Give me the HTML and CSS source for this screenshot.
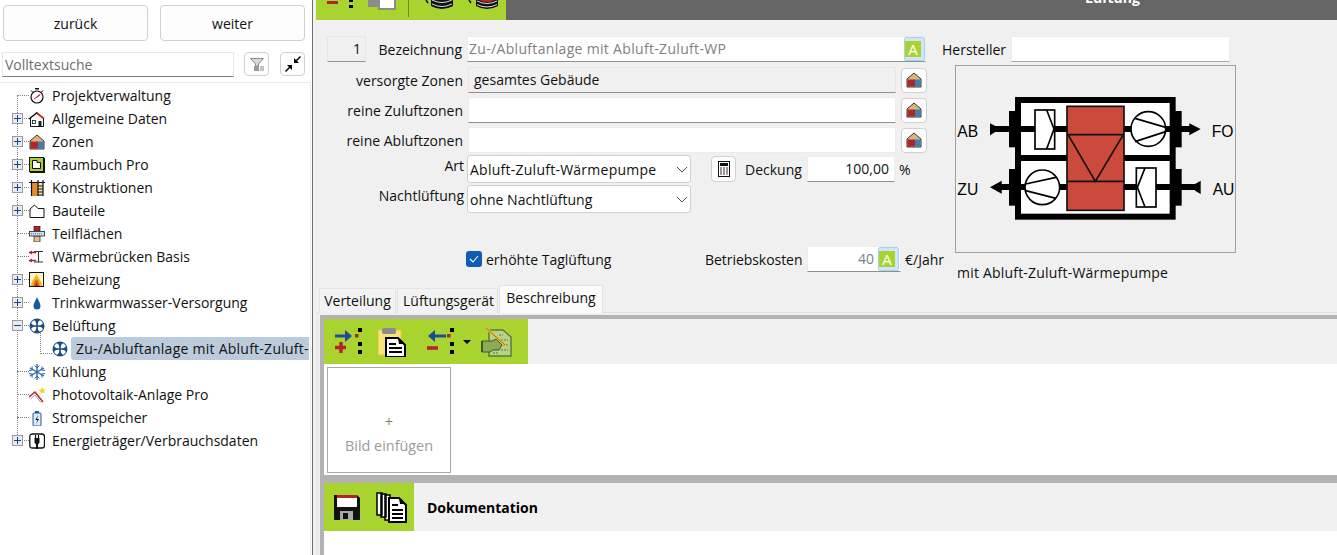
FILE: index.html
```html
<!DOCTYPE html>
<html lang="de">
<head>
<meta charset="utf-8">
<title>Lüftung</title>
<link rel="stylesheet" href="styles.css">
</head>
<body>
<svg class="defs" width="0" height="0">
  <defs>
    <symbol id="zone" viewBox="0 0 16 16">
      <path d="M8 1 15 7V15H1V7Z" fill="#d9b778" stroke="#222" stroke-width=".9"/>
      <rect x="1.500" y="7.500" width="7.500" height="7" fill="#b3242a"/>
      <rect x="9" y="7.500" width="5.500" height="7" fill="#3d7fb5"/>
    </symbol>
    <symbol id="fan" viewBox="0 0 16 16">
      <circle cx="8" cy="8" r="7.500" fill="#1c4e86"/>
      <g transform="rotate(45 8 8)">
        <path d="M8 6.800C6.200 5.500 5.400 3.600 6 1.700 7.300 1.300 8.700 1.300 10 1.700 10.600 3.600 9.800 5.500 8 6.800Z" fill="#fff"/>
        <path d="M8 9.200C6.200 10.500 5.400 12.400 6 14.300 7.300 14.700 8.700 14.700 10 14.300 10.600 12.400 9.800 10.500 8 9.200Z" fill="#fff"/>
        <path d="M6.800 8C5.500 6.200 3.600 5.400 1.700 6 1.300 7.300 1.300 8.700 1.700 10 3.600 10.600 5.500 9.800 6.800 8Z" fill="#fff"/>
        <path d="M9.200 8C10.500 6.200 12.400 5.400 14.300 6 14.700 7.300 14.700 8.700 14.300 10 12.400 10.600 10.500 9.800 9.200 8Z" fill="#fff"/>
      </g>
    </symbol>
    <symbol id="dots" viewBox="0 0 5 28">
      <rect x="0" y="0" width="4" height="4" fill="#000"/>
      <rect x="0" y="14" width="4" height="4" fill="#000"/>
      <rect x="0" y="22" width="4" height="4" fill="#000"/>
    </symbol>
  </defs>
</svg>

<div class="app">
  <aside class="side">
    <div class="nav-row">
      <button class="nav-btn">zurück</button>
      <button class="nav-btn">weiter</button>
    </div>
    <div class="search-row">
      <div class="search">Volltextsuche</div>
      <button class="tool-btn search-filter">
        <svg width="16" height="16" viewBox="0 0 16 16"><path d="M1.500 2.500H14.500L9.500 8V10H6.500V8Z" fill="#d8d8d8" stroke="#8b8b8b"/><rect x="5" y="10" width="5" height="5" fill="#9a9a9a"/><rect x="11" y="10" width="4" height="5" fill="#c4c4c4"/></svg>
      </button>
      <button class="tool-btn search-collapse">
        <svg width="16" height="16" viewBox="0 0 16 16"><path d="M15 0 16 1 12 5 14 7H9V2L11 4Z" fill="#000"/><path d="M1 16 0 15 4 11 2 9H7V14L5 12Z" fill="#000"/></svg>
      </button>
    </div>

    <div class="tree">
      <div class="tree-row"><span class="twig"></span>
        <svg class="ico" viewBox="0 0 16 16"><rect x="6" y="0" width="4" height="1.500" fill="#111"/><path d="M2 2.500 3.500 4M14 2.500 12.500 4" stroke="#111"/><circle cx="8" cy="9" r="6" fill="#fff" stroke="#111" stroke-width="1.200"/><path d="M8 9 11 6.500" stroke="#c9252b" stroke-width="1.300"/><path d="M5 11 8 9" stroke="#c9252b"/></svg>
        <span class="tree-label">Projektverwaltung</span></div>
      <div class="tree-row"><span class="exp"></span><span class="twig short"></span>
        <svg class="ico" viewBox="0 0 16 16"><path d="M1.500 15.500V7L8 2 14.500 7V15.500Z" fill="#fff" stroke="#111"/><path d="M8 1 15.500 7 14 8 8 3.500Z" fill="#c0272d"/><path d="M0 8 8 1.500" stroke="#111" stroke-width="1.300"/><rect x="9.500" y="10" width="3" height="5.500" fill="#222"/><rect x="3.500" y="9.500" width="3" height="3" fill="none" stroke="#111" stroke-width=".8"/></svg>
        <span class="tree-label">Allgemeine Daten</span></div>
      <div class="tree-row"><span class="exp"></span><span class="twig short"></span>
        <svg class="ico"><use href="#zone"/></svg>
        <span class="tree-label">Zonen</span></div>
      <div class="tree-row"><span class="exp"></span><span class="twig short"></span>
        <svg class="ico" viewBox="0 0 16 16"><rect x="1" y="1" width="15" height="15" fill="#111"/><rect x=".5" y=".5" width="14" height="14" fill="#a9cf38" stroke="#111"/><path d="M3.500 3.500H8V5.500H11.500V11.500H3.500Z" fill="#fff" stroke="#111"/></svg>
        <span class="tree-label">Raumbuch Pro</span></div>
      <div class="tree-row"><span class="exp"></span><span class="twig short"></span>
        <svg class="ico" viewBox="0 0 16 16"><rect x="3" y="3" width="6" height="13" fill="#e68a2e"/><rect x="9" y="3" width="5" height="13" fill="#f3e6b4"/><path d="M2.500 0V16M9 0V16M14 0V16" stroke="#111" stroke-width="1.200"/><path d="M0 2.500H16M9 6H14M9 9H14M9 12H14M9 15H14" stroke="#111"/></svg>
        <span class="tree-label">Konstruktionen</span></div>
      <div class="tree-row"><span class="exp"></span><span class="twig short"></span>
        <svg class="ico" viewBox="0 0 16 16"><path d="M1 14.500V6L5.500 2 9 5.500H15V14.500Z" fill="#fff" stroke="#111"/></svg>
        <span class="tree-label">Bauteile</span></div>
      <div class="tree-row"><span class="twig"></span>
        <svg class="ico" viewBox="0 0 16 16"><rect x="5" y="0" width="6" height="5" fill="#b3242a" stroke="#222" stroke-width=".7"/><rect x="5" y="10" width="6" height="6" fill="#e0c08c" stroke="#222" stroke-width=".7"/><rect x=".5" y="5.500" width="15" height="4.500" fill="#cfe0ee" stroke="#222" stroke-width=".8"/><path d="M2 7.800H14" stroke="#3b6ea8" stroke-dasharray="1 1"/></svg>
        <span class="tree-label">Teilflächen</span></div>
      <div class="tree-row"><span class="twig"></span>
        <svg class="ico" viewBox="0 0 16 16"><path d="M5 2.500H14M5 13H14M9.500 3V13" stroke="#333" stroke-width="1.100"/><path d="M0 3.500H7M0 11.500H7" stroke="#a82024" stroke-width="1.300"/><path d="M0 3.500 3 1.500V5.500ZM0 11.500 3 9.500V13.500Z" fill="#a82024"/></svg>
        <span class="tree-label">Wärmebrücken Basis</span></div>
      <div class="tree-row"><span class="exp"></span><span class="twig short"></span>
        <svg class="ico" viewBox="0 0 16 16"><rect x=".5" y=".5" width="14" height="14" fill="#fff6c4" stroke="#111"/><path d="M7.500 2C9 6 13 9 13 14H2C2 9 6 6 7.500 2Z" fill="#f4b41e"/><path d="M7.500 7C9 9 10.500 11 10.500 14H4.500C4.500 11 6 9 7.500 7Z" fill="#d9641e"/><path d="M7.500 11 9 14H6Z" fill="#b3242a"/></svg>
        <span class="tree-label">Beheizung</span></div>
      <div class="tree-row"><span class="exp"></span><span class="twig short"></span>
        <svg class="ico" viewBox="0 0 16 16"><path d="M8 2C9 5 11.500 8 11.500 11A3.500 3.500 0 0 1 4.500 11C4.500 8 7 5 8 2Z" fill="#1c5a9e"/></svg>
        <span class="tree-label">Trinkwarmwasser-Versorgung</span></div>
      <div class="tree-row"><span class="exp exp-open"></span><span class="twig short"></span>
        <svg class="ico"><use href="#fan"/></svg>
        <span class="tree-label">Belüftung</span></div>
      <div class="tree-row tree-child"><span class="elbow"></span>
        <svg class="ico"><use href="#fan"/></svg>
        <span class="tree-label selected">Zu-/Abluftanlage mit Abluft-Zuluft-Wärmepumpe</span></div>
      <div class="tree-row"><span class="twig"></span>
        <svg class="ico" viewBox="0 0 16 16"><path d="M8 0V16M1 4 15 12M15 4 1 12" stroke="#2a66ad" stroke-width="1.400"/><path d="M5.500 1.500 8 4 10.500 1.500M5.500 14.500 8 12 10.500 14.500M0 6.500 3.500 6 3 2.500M16 9.500 12.500 10 13 13.500M0 9.500 3.500 10 3 13.500M16 6.500 12.500 6 13 2.500" stroke="#2a66ad" fill="none"/></svg>
        <span class="tree-label">Kühlung</span></div>
      <div class="tree-row"><span class="twig"></span>
        <svg class="ico" viewBox="0 0 16 16"><path d="M0 10 6 5 14 15" fill="none" stroke="#b3242a" stroke-width="1.500"/><path d="M2 11.500 6 8 12 15.500" fill="none" stroke="#999" stroke-width="1"/><path d="M13 0 14 2 16 2 15 4 16 6 13.500 5.500 12 7 11.500 4.500 9.500 3.500 12 2.500Z" fill="#f1d227"/></svg>
        <span class="tree-label">Photovoltaik-Anlage Pro</span></div>
      <div class="tree-row"><span class="twig"></span>
        <svg class="ico" viewBox="0 0 16 16"><rect x="4" y="3" width="8" height="13" rx="1" fill="#dfeaf6" stroke="#1c5a9e"/><rect x="6" y="1" width="4" height="2" fill="#1c5a9e"/><path d="M9 5 6.500 10H8.500L7 14 10 9H8Z" fill="#111"/></svg>
        <span class="tree-label">Stromspeicher</span></div>
      <div class="tree-row"><span class="exp"></span><span class="twig short"></span>
        <svg class="ico" viewBox="0 0 16 16"><path d="M3.500 1H13Q15.500 1 15.500 3.500V12.500Q15.500 15 13 15H3.500Q.8 15 .8 12.500V3.500Q.8 1 3.500 1Z" fill="#fff" stroke="#111" stroke-width="1.300"/><path d="M5.500 5H10.500V9.500L9 11.500V16H7V11.500L5.500 9.500Z" fill="#111"/><path d="M6.500 2V5M9.500 2V5" stroke="#111" stroke-width="1.200"/></svg>
        <span class="tree-label">Energieträger/Verbrauchsdaten</span></div>
    </div>
  </aside>

  <main class="main">
    <header class="topbar">
      <div class="topbar-tools">
        <svg class="top-icons" width="190" height="20" viewBox="0 0 190 20">
          <rect x="11" y="1" width="11" height="3" fill="#b3242a"/>
          <rect x="33" y="-1" width="4" height="3" fill="#000"/>
          <rect x="33" y="5" width="4" height="3" fill="#000"/>
          <rect x="52" y="-1" width="27" height="8" fill="#8c8c8c"/>
          <path d="M63 -1H79V9H63Z" fill="#fff" stroke="#8c8c8c" stroke-width="2"/>
          <path d="M92.500 0V17" stroke="#6f8a28"/>
          <path d="M110 0 112 3" stroke="#111" stroke-width="1.500"/>
          <path d="M115 -1V6Q126 12 137 6V-1Z" fill="#111"/>
          <path d="M116 0Q126 5 136 0M116 4Q126 9 136 4" fill="none" stroke="#ddd"/>
          <path d="M153 0 155 3" stroke="#111" stroke-width="1.500"/>
          <path d="M160 -1V6Q171 12 182 6V-1Z" fill="#111"/>
          <path d="M163 0H179L174 2H168Z" fill="#b3242a"/>
          <path d="M161 1Q171 6 181 1M161 4.500Q171 9.500 181 4.500" fill="none" stroke="#ddd"/>
        </svg>
      </div>
      <div class="topbar-title"><span class="title-text">Lüftung</span></div>
    </header>

    <section class="form">
      <div class="form-left">
        <div class="row row-first">
          <div class="index-box">1</div>
          <div class="label label-auto">Bezeichnung</div>
          <div class="field field-name">
            <span class="muted wide-md">Zu-/Abluftanlage mit Abluft-Zuluft-WP</span>
            <span class="auto-btn"><span class="auto-a">A</span></span>
          </div>
        </div>
        <div class="row row-zone">
          <div class="label">versorgte Zonen</div>
          <div class="field field-zone field-off">gesamtes Gebäude</div>
          <button class="tool-btn zone-btn"><svg class="ico"><use href="#zone"/></svg></button>
        </div>
        <div class="row row-zone">
          <div class="label">reine Zuluftzonen</div>
          <div class="field field-zone"></div>
          <button class="tool-btn zone-btn"><svg class="ico"><use href="#zone"/></svg></button>
        </div>
        <div class="row row-zone">
          <div class="label">reine Abluftzonen</div>
          <div class="field field-zone field-flat"></div>
          <button class="tool-btn zone-btn"><svg class="ico"><use href="#zone"/></svg></button>
        </div>
        <div class="row row-art">
          <div class="label label-art label-top">Art</div>
          <div class="select"><span class="wide-sm">Abluft-Zuluft-Wärmepumpe</span>
            <svg class="chev" width="12" height="7" viewBox="0 0 12 7"><path d="M1 1 6 6 11 1" fill="none" stroke="#555"/></svg></div>
          <button class="tool-btn calc-btn">
            <svg width="12" height="16" viewBox="0 0 12 16"><rect x=".5" y=".5" width="11" height="15" fill="#fff" stroke="#111"/><rect x="2" y="2" width="8" height="3" fill="#111"/><path d="M2 7H4M5 7H7M8 7H10M2 9H4M5 9H7M8 9H10M2 11H4M5 11H7M8 11H10M2 13H4M5 13H7" stroke="#333" stroke-width="1.200"/><path d="M8 13H10" stroke="#c9252b" stroke-width="1.200"/></svg>
          </button>
          <div class="label-inline deckung">Deckung</div>
          <div class="field field-num">100,00</div>
          <div class="unit">%</div>
        </div>
        <div class="row row-night">
          <div class="label label-night label-top">Nachtlüftung</div>
          <div class="select">ohne Nachtlüftung
            <svg class="chev" width="12" height="7" viewBox="0 0 12 7"><path d="M1 1 6 6 11 1" fill="none" stroke="#555"/></svg></div>
        </div>
        <div class="row row-check">
          <span class="check"><svg width="10" height="8" viewBox="0 0 10 8"><path d="M1 4 4 7 9 1" fill="none" stroke="#fff" stroke-width="1.100"/></svg></span>
          <span class="check-text">erhöhte Taglüftung</span>
          <div class="label-inline betrieb">Betriebskosten</div>
          <div class="field field-cost"><span class="muted cost-val">40</span><span class="auto-btn cost-auto"><span class="auto-a">A</span></span></div>
          <div class="unit">€/Jahr</div>
        </div>
      </div>
      <div class="form-right">
        <div class="row row-maker">
          <div class="label-inline maker-label">Hersteller</div>
          <div class="field field-maker"></div>
        </div>
        <div class="diagram">
          <svg width="279" height="186" viewBox="78 108 837 558">
            <rect x="237" y="243" width="518" height="109" fill="#000"/>
            <rect x="237" y="417" width="518" height="110" fill="#000"/>
            <rect x="264" y="210" width="464" height="350" fill="#fff" stroke="#000" stroke-width="18"/>
            <rect x="264" y="375" width="464" height="18" fill="#000"/>
            <rect x="190" y="288" width="600" height="18" fill="#000"/>
            <rect x="210" y="462" width="590" height="18" fill="#000"/>
            <path d="M180 280 197 289V305L180 316Z" fill="#000"/>
            <path d="M778 280 812 297 778 316Z" fill="#000"/>
            <path d="M180 472 215 452V491Z" fill="#000"/>
            <path d="M812 452 795 462V482L812 492Z" fill="#000"/>
            <rect x="411" y="229" width="171" height="312" fill="#cc4a3c" stroke="#111" stroke-width="5"/>
            <path d="M411 314H582M411 454H582M414 314 496 454 580 314" fill="none" stroke="#111" stroke-width="5"/>
            <rect x="315" y="240" width="59" height="117" fill="#fff" stroke="#000" stroke-width="5"/>
            <path d="M350 240 372 297 350 357" fill="none" stroke="#000" stroke-width="5"/>
            <rect x="619" y="414" width="59" height="117" fill="#fff" stroke="#000" stroke-width="5"/>
            <path d="M645 414 622 472 645 531" fill="none" stroke="#000" stroke-width="5"/>
            <circle cx="655" cy="297" r="52" fill="#fff" stroke="#000" stroke-width="5"/>
            <path d="M615 265 707 292M615 335 707 305" fill="none" stroke="#000" stroke-width="5"/>
            <circle cx="337" cy="472" r="52" fill="#fff" stroke="#000" stroke-width="5"/>
            <path d="M378 442 287 462M378 505 287 482" fill="none" stroke="#000" stroke-width="5"/>
            <text class="dia-text" x="82" y="320">AB</text>
            <text class="dia-text" x="845" y="320">FO</text>
            <text class="dia-text" x="82" y="495">ZU</text>
            <text class="dia-text" x="848" y="495">AU</text>
          </svg>
        </div>
        <div class="caption">mit Abluft-Zuluft-Wärmepumpe</div>
      </div>
    </section>

    <nav class="tabs">
      <div class="tab">Verteilung</div>
      <div class="tab">Lüftungsgerät</div>
      <div class="tab tab-active">Beschreibung</div>
    </nav>

    <section class="pane">
      <div class="pane-inner">
        <div class="toolbar toolbar-main">
          <div class="green green-main">
            <svg class="tb-ico" width="28" height="30" viewBox="0 0 28 30">
              <path d="M0 9H10" stroke="#1c4e96" stroke-width="3"/><path d="M10 3 17 9 10 15Z" fill="#1c4e96"/>
              <path d="M6 15V26M0 20.500H11" stroke="#b3242a" stroke-width="3.500"/>
              <rect x="20" y="7" width="3.500" height="3.500" fill="#b3242a"/>
              <use href="#dots" x="23" y="1" width="5" height="28"/>
            </svg>
            <svg class="tb-ico clip" width="28" height="30" viewBox="0 0 28 30">
              <rect x="0" y="3" width="23" height="25" fill="#f9e27a" stroke="#f2c232"/>
              <rect x="4" y="1" width="14" height="6" rx="2" fill="#8d8d8d"/>
              <path d="M8 11H20L27 18V30H8Z" fill="#fff" stroke="#000" stroke-width="2"/>
              <path d="M20 11 21 17H27Z" fill="#000"/>
              <path d="M11 17H18M11 21H24M11 25H24" stroke="#000" stroke-width="1.800"/>
            </svg>
            <svg class="tb-ico" width="28" height="30" viewBox="0 0 28 30">
              <path d="M8 9H19" stroke="#1c4e96" stroke-width="3"/><path d="M8 3 1 9 8 15Z" fill="#1c4e96"/>
              <path d="M0 21H11" stroke="#b3242a" stroke-width="3.500"/>
              <rect x="20" y="7" width="3.500" height="3.500" fill="#b3242a"/>
              <use href="#dots" x="23" y="1" width="5" height="28"/>
            </svg>
            <svg class="tb-caret" width="8" height="4" viewBox="0 0 8 4"><path d="M0 0H8L4 4Z" fill="#000"/></svg>
            <svg class="tb-ico" width="31" height="30" viewBox="0 0 31 30">
              <path d="M8 3H22L30 10V29H8Z" fill="#b9d28a" stroke="#5c7a38" stroke-width="1.500"/>
              <path d="M18 8H22M20 13H27M22 18H27M20 23H27M12 26H17" stroke="#5c7a38" stroke-dasharray="2 1"/>
              <path d="M1 14H11L15 12 21 18 18 23H12L9 25H1Z" fill="#8bab54" stroke="#3f5a28"/>
              <path d="M1 14V25" stroke="#3f5a28" stroke-width="2"/>
              <path d="M5 1 24 18" stroke="#e6c22e" stroke-width="2.500"/>
              <path d="M5 1 24 18" stroke="#5c4a18" stroke-width=".6"/>
            </svg>
          </div>
        </div>
        <div class="gallery">
          <div class="add-image">
            <span class="add-plus">+</span>
            <span class="add-text">Bild einfügen</span>
          </div>
        </div>
        <div class="splitter"></div>
        <div class="toolbar toolbar-doc">
          <div class="green green-doc">
            <svg class="tb-ico" width="27" height="27" viewBox="0 0 27 27">
              <path d="M1 1H24L27 4V26H1Z" fill="#111"/>
              <rect x="4" y="1" width="20" height="3" fill="#b3242a"/>
              <rect x="4" y="4" width="20" height="9" fill="#fff"/>
              <rect x="7" y="17" width="13" height="9" fill="#aaa"/>
              <rect x="10" y="19" width="5" height="6" fill="#111"/>
            </svg>
            <svg class="tb-ico doc-stack" width="31" height="31" viewBox="0 0 31 31">
              <path d="M1 1H6V23H1ZM5 2H10V25H5ZM9 3H14V28H9Z" fill="#fff" stroke="#000" stroke-width="1.500"/>
              <path d="M13 6H23L30 13V30H13Z" fill="#fff" stroke="#000" stroke-width="2"/>
              <path d="M23 6 24 12H30Z" fill="#000"/>
              <path d="M16 13H22M16 18H27M16 22H27M16 26H27" stroke="#000" stroke-width="1.800"/>
            </svg>
          </div>
          <div class="doc-title">Dokumentation</div>
        </div>
        <div class="doc-body"></div>
      </div>
    </section>
  </main>
</div>
</body>
</html>
```

FILE: styles.css
```css
* { box-sizing: border-box; }
html, body { margin: 0; height: 100%; overflow: hidden; }
body { font-family: "Open Sans", "Noto Sans", sans-serif; font-size: 14px; color: #111; background: #fff; }
.defs { display: block; height: 0; }
button { font: inherit; color: inherit; padding: 0; }
.wide-md { letter-spacing: .32px; }
.wide-sm { letter-spacing: .25px; }

.app { display: flex; height: 555px; }

/* left panel */
.side { width: 313px; flex: none; background: #fff; border-right: 1px solid #707070; overflow: hidden; }
.nav-row { display: flex; gap: 12px; padding: 5px 0 0 3px; }
.nav-btn { width: 145px; height: 36px; background: #fdfdfd; border: 1px solid #d0d0d0; border-radius: 4px; }
.search-row { display: flex; align-items: flex-start; padding: 11px 0 0 2px; height: 41px; }
.search { width: 232px; height: 25px; line-height: 23px; padding-left: 2px; color: #6d6d6d; background: #fff; border: 1px solid #e8e8e8; border-bottom: 1px solid #7c7c7c; }
.tool-btn { display: flex; align-items: center; justify-content: center; background: #fdfdfd; border: 1px solid #d0d0d0; border-radius: 4px; }
.search-filter { width: 25px; height: 24px; margin-left: 10px; }
.search-collapse { width: 25px; height: 24px; margin-left: 11px; }

.tree { position: relative; width: 311px; height: 473px; padding-top: 1px; border-top: 1px solid #ebebeb; border-right: 1px solid #ebebeb; overflow: hidden; }
.tree::before { content: ""; position: absolute; left: 17px; top: 13px; height: 345px; border-left: 1px dotted #808080; }
.tree-row { position: relative; display: flex; align-items: center; height: 23px; white-space: nowrap; }
.twig { width: 12px; margin-left: 17px; border-top: 1px dotted #808080; flex: none; }
.twig.short { width: 7px; margin-left: 0; }
.exp { position: relative; width: 11px; height: 11px; margin-left: 12px; margin-right: -1px; background: #e6ecf4; border: 1px solid #9a9a9a; flex: none; }
.exp::before { content: ""; position: absolute; left: 1px; top: 4px; width: 7px; height: 1px; background: #1c3f7c; }
.exp::after { content: ""; position: absolute; left: 4px; top: 1px; width: 1px; height: 7px; background: #1c3f7c; }
.exp-open::after { display: none; }
.ico { width: 16px; height: 16px; flex: none; }
.tree-label { margin-left: 7px; }
.tree-child { padding-left: 40px; }
.elbow { width: 12px; height: 23px; margin-top: -12px; border-left: 1px dotted #808080; border-bottom: 1px dotted #808080; flex: none; }
.selected { margin-left: 3px; width: 238px; height: 23px; line-height: 23px; padding-left: 5px; overflow: hidden; letter-spacing: .25px; background: #bccbdc; border-radius: 3px 0 0 3px; }

/* main */
.main { flex: 1; min-width: 0; background: #f0f0f0; display: flex; flex-direction: column; overflow: hidden; }
.topbar { display: flex; height: 20px; flex: none; padding-left: 3px; overflow: hidden; }
.topbar-tools { width: 190px; flex: none; background: #a9d42f; }
.top-icons { display: block; }
.topbar-title { flex: 1; background: #666; color: #fff; font-weight: 700; padding-left: 579px; line-height: 0; }
.title-text { display: block; margin-top: -2px; }

.form { display: flex; height: 252px; flex: none; padding: 16px 0 0 14px; }
.form-left { width: 600px; flex: none; }
.form-right { margin-left: 15px; width: 295px; flex: none; }
.row { display: flex; align-items: center; }
.row > * { flex: none; }
.row-first { height: 26px; margin-bottom: 5px; padding-right: 1px; }
.row-zone { height: 26px; margin-bottom: 4px; }
.row-art { height: 28px; margin: -2px 0 2px; }
.row-night { height: 28px; }
.row-check { height: 26px; margin-top: 33px; padding-left: 139px; }
.label { width: 136px; text-align: right; margin-right: 5px; }
.label-auto { width: auto; margin-left: auto; margin-right: 5px; }
.label-art { margin-right: 3px; margin-left: 1px; width: 136px; }
.label-night { margin-right: 3px; margin-left: 0; width: 137px; }
.label-top { align-self: flex-start; padding-top: 1px; }
.index-box { width: 39px; height: 26px; line-height: 24px; text-align: right; padding-right: 4px; background: #f0f0f0; border: 1px solid #e6e6e6; border-bottom: 1px solid #8f8f8f; }
.field { height: 26px; line-height: 24px; background: #fff; border: 1px solid #ececec; border-bottom: 1px solid #8f8f8f; padding: 0 2px; }
.field-name { display: flex; justify-content: space-between; width: 459px; padding: 0 0 0 1px; }
.field-zone { width: 428px; padding-left: 5px; }
.field-off { background: #f0f0f0; border-color: #e6e6e6; border-bottom-color: #8f8f8f; }
.field-flat { border-bottom-color: #ececec; }
.muted { color: #808080; }
.auto-btn { width: 21px; height: 24px; margin-top: 0; display: flex; align-items: flex-end; justify-content: flex-start; padding: 0 0 3px 0; background: #cfe6fa; border: 1px solid #a8d0f0; border-radius: 2px; }
.auto-a { display: block; width: 16px; height: 16px; line-height: 16px; text-align: center; background: #a9d42f; color: #fff; font-size: 15px; }
.zone-btn { width: 26px; height: 25px; margin-left: 5px; }
.select { position: relative; width: 224px; height: 28px; line-height: 28px; padding-left: 2px; background: #fff; border: 1px solid #d0d0d0; border-radius: 3px; }
.chev { position: absolute; right: 2px; top: 10px; }
.calc-btn { width: 25px; height: 26px; margin-left: 20px; }
.deckung { margin-left: 9px; width: 57px; }
.field-num { width: 88px; margin-left: 5px; text-align: right; padding-right: 5px; }
.unit { margin-left: 4px; }
.check { width: 16px; height: 16px; display: flex; align-items: center; justify-content: center; background: #0f5cb4; border-radius: 3px; }
.check-text { margin-left: 4px; width: 219px; }
.betrieb { width: 97px; white-space: nowrap; letter-spacing: -.05px; }
.field-cost { display: flex; justify-content: flex-end; align-items: flex-start; width: 94px; margin-left: 5px; padding-right: 1px; }
.cost-val { margin-right: 4px; }

.row-maker { height: 26px; margin-bottom: 3px; }
.maker-label { width: 64px; white-space: nowrap; }
.field-maker { width: 219px; margin-left: 5px; border-bottom-color: #aaa; }
.diagram { margin-left: 13px; width: 281px; height: 188px; background: #f0f0f0; border: 1px solid #a0a0a0; }
.diagram svg { display: block; }
.dia-text { font-family: "Liberation Sans", Arial, sans-serif; font-size: 47px; fill: #000; }
.caption { margin: 10px 0 0 15px; letter-spacing: .2px; white-space: nowrap; }

/* tabs */
.tabs { display: flex; align-items: flex-end; height: 28px; margin: 13px 0 -1px 6px; position: relative; z-index: 1; flex: none; }
.tab { height: 25px; line-height: 23px; padding: 0; margin-right: 1px; background: #f2f2f2; border: 1px solid #e4e4e4; border-bottom: 0; text-align: center; white-space: nowrap; }
.tab:nth-child(1) { width: 77px; }
.tab:nth-child(2) { width: 101px; padding-left: 2px; }
.tab-active { width: 104px; height: 28px; line-height: 24px; margin-right: 0; background: #fbfbfb; }

.pane { flex: 1; min-height: 0; margin-left: 4px; padding: 2px 0 0 2px; background: #f0f0f0; border-top: 1px solid #e0e0e0; border-left: 1px solid #e6e6e6; }
.pane-inner { height: 100%; display: flex; flex-direction: column; border-top: 4px solid #b2b2b2; border-left: 4px solid #b2b2b2; background: #fff; }
.toolbar { display: flex; align-items: stretch; background: #f1f1f1; flex: none; }
.toolbar-main { height: 45px; }
.toolbar-doc { height: 48px; align-items: center; }
.green { background: #a9d42f; display: flex; align-items: center; align-self: stretch; }
.green-main { width: 204px; padding-left: 11px; }
.green-doc { width: 90px; padding-left: 9px; }
.tb-ico { flex: none; display: block; }
.clip { margin-left: 15px; }
.clip + .tb-ico { margin-left: 21px; }
.tb-caret { margin: 0 10px 0 8px; flex: none; }
.doc-stack { margin-left: 16px; }
.doc-title { margin-left: 13px; font-weight: 700; color: #000; }
.gallery { height: 111px; flex: none; padding: 3px; background: #fff; }
.add-image { width: 124px; height: 106px; display: flex; flex-direction: column; align-items: center; padding-top: 45px; background: #fff; border: 1px solid #a8a8a8; }
.add-plus { color: #8a7a60; line-height: 18px; }
.add-text { color: #9a9a9a; margin-top: 5px; font-size: 14.4px; }
.splitter { height: 8px; background: #b2b2b2; flex: none; }
.doc-body { flex: 1; background: #fff; }
```
